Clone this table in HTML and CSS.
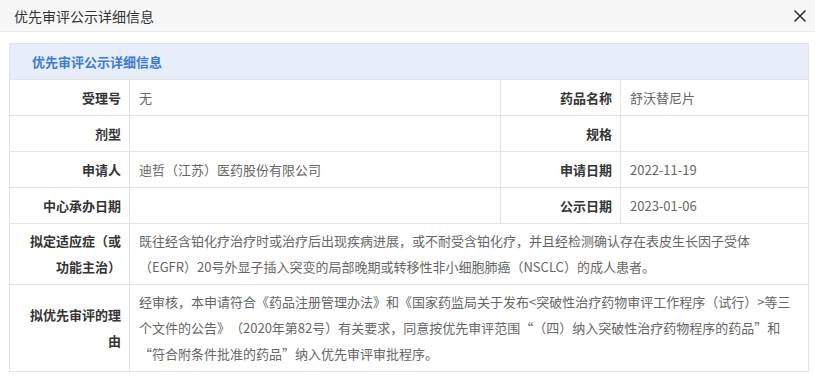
FILE: index.html
```html
<!DOCTYPE html>
<html lang="zh-CN">
<head>
<meta charset="utf-8">
<title>优先审评公示详细信息</title>
<link rel="stylesheet" href="styles.css">
</head>
<body>
<div class="dialog">
  <div class="dlg-head">
    <span class="dlg-title">优先审评公示详细信息</span>
    <svg class="close" width="14" height="14" viewBox="0 0 14 14"><path d="M1.5 1.5 L12.5 12.5 M12.5 1.5 L1.5 12.5" stroke="#333" stroke-width="1.6" fill="none"/></svg>
  </div>
  <div class="dlg-body">
    <table class="info">
      <colgroup>
        <col class="c-label"><col class="c-val"><col class="c-label2"><col>
      </colgroup>
      <tr class="cap"><td colspan="4">优先审评公示详细信息</td></tr>
      <tr class="row">
        <th>受理号</th><td>无</td>
        <th>药品名称</th><td>舒沃替尼片</td>
      </tr>
      <tr class="row">
        <th>剂型</th><td></td>
        <th>规格</th><td></td>
      </tr>
      <tr class="row">
        <th>申请人</th><td>迪哲（江苏）医药股份有限公司</td>
        <th>申请日期</th><td>2022-11-19</td>
      </tr>
      <tr class="row">
        <th>中心承办日期</th><td></td>
        <th>公示日期</th><td>2023-01-06</td>
      </tr>
      <tr>
        <th>拟定适应症（或功能主治）</th>
        <td colspan="3">既往经含铂化疗治疗时或治疗后出现疾病进展，或不耐受含铂化疗，并且经检测确认存在表皮生长因子受体（EGFR）20号外显子插入突变的局部晚期或转移性非小细胞肺癌（NSCLC）的成人患者。</td>
      </tr>
      <tr>
        <th>拟优先审评的理由</th>
        <td colspan="3">经审核，本申请符合《药品注册管理办法》和《国家药监局关于发布&lt;突破性治疗药物审评工作程序（试行）&gt;等三个文件的公告》（2020年第82号）有关要求，同意按优先审评范围<span class="q">“</span>（四）纳入突破性治疗药物程序的药品<span class="q">”</span>和<span class="q">“</span>符合附条件批准的药品<span class="q">”</span>纳入优先审评审批程序。</td>
      </tr>
    </table>
  </div>
</div>
</body>
</html>
```

FILE: styles.css
```css
html, body {
  margin: 0;
  padding: 0;
  background: #ffffff;
}
body {
  font-family: "Noto Sans CJK SC", "Noto Sans", sans-serif;
  color: #333;
  width: 815px;
  height: 376px;
  overflow: hidden;
  text-spacing-trim: space-all;
}
.dialog {
  width: 815px;
}
.dlg-head {
  height: 32px;
  box-sizing: border-box;
  background: #f7f7f7;
  border-bottom: 1px solid #e8e8e8;
  display: flex;
  align-items: center;
  justify-content: space-between;
  padding: 0 8px 0 14px;
}
.dlg-title {
  font-size: 14px;
  color: #333;
  line-height: 20px;
}
.close {
  display: block;
}
.dlg-body {
  padding: 11px 7px 0 9px;
}
.info {
  width: 800px;
  border-collapse: collapse;
  table-layout: fixed;
  font-size: 13px;
  border: 1px solid #e3e3e3;
}
.c-label { width: 120px; }
.c-val { width: 371px; }
.c-label2 { width: 120px; }
.info th,
.info td {
  border: 1px solid #e3e3e3;
  line-height: 26px;
  padding: 4px 9px;
  vertical-align: middle;
}
.info th {
  text-align: right;
  font-weight: bold;
  color: #333;
  padding: 4px 8px 4px 14px;
}
.info td {
  color: #666;
  text-align: left;
}
.q {
  font-feature-settings: "fwid";
}
.row {
  height: 36px;
}
.cap td {
  background: #e8eef9;
  color: #3a7bd5;
  font-weight: bold;
  padding: 4px 22px;
  height: 27px;
}
```
